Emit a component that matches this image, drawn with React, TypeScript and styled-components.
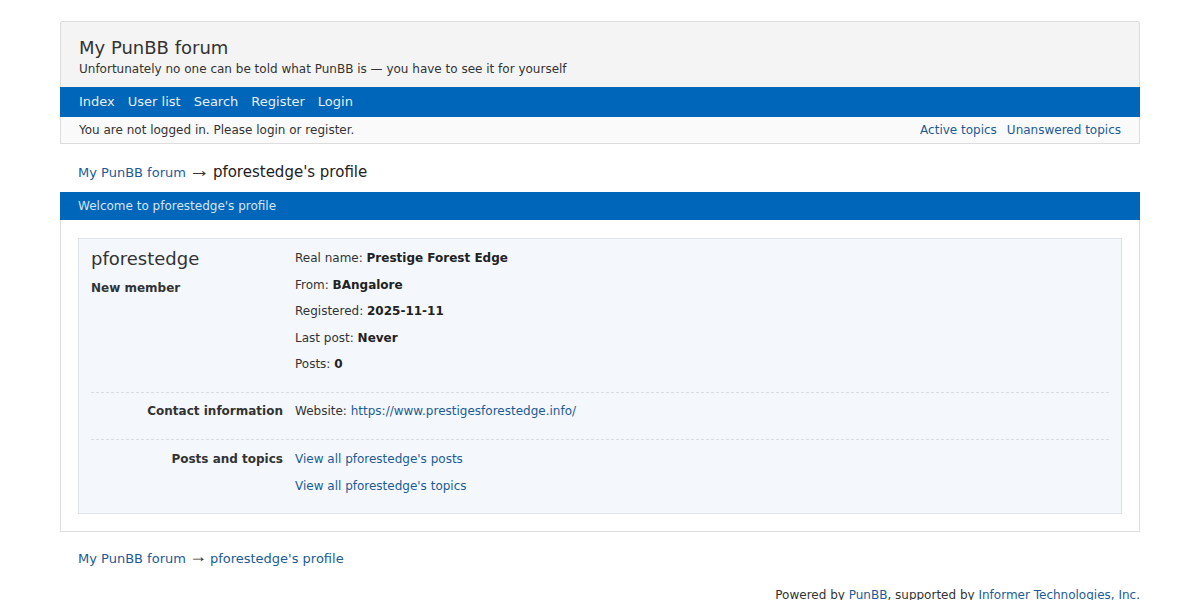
import React from 'react';
import styled, { createGlobalStyle } from 'styled-components';

const GlobalStyle = createGlobalStyle`
  html, body {
    margin: 0;
    padding: 0;
    background: #fff;
  }
  body {
    font-family: "DejaVu Sans", Verdana, sans-serif;
    font-size: 13px;
    color: #333;
  }
  a {
    color: #1c5b96;
    text-decoration: none;
  }
`;

const Page = styled.div`
  width: 1080px;
  margin: 0 auto;
  padding-top: 21px;
`;

const Brand = styled.div`
  background: #f4f4f4;
  border: 1px solid #ddd;
  border-bottom: none;
  border-radius: 3px 3px 0 0;
  padding: 15px 18px 10px;

  h1 {
    margin: 0;
    font-size: 18px;
    font-weight: normal;
    color: #333;
    line-height: 22px;
  }
  p {
    margin: 2px 0 0;
    font-size: 12px;
    line-height: 16px;
  }
`;

const NavBar = styled.nav`
  background: #0066b9;
  height: 30px;
  box-sizing: border-box;
  display: flex;
  align-items: center;
  gap: 13px;
  padding: 0 19px 2px;

  a {
    color: #e6eef8;
    font-size: 13px;
  }
`;

const StatusBar = styled.div`
  background: #fafafa;
  border: 1px solid #ddd;
  border-top: none;
  height: 26px;
  display: flex;
  align-items: center;
  justify-content: space-between;
  padding: 0 18px;
  font-size: 12px;

  div {
    display: flex;
    gap: 10px;
  }
`;

const Crumbs = styled.div<{ $top?: boolean }>`
  padding: 0 18px;
  height: 28px;
  display: flex;
  align-items: center;
  gap: 3px;
  margin: ${p => (p.$top ? '14px 0 6px' : '12px 0 0')};
  font-size: 13px;

  strong {
    font-weight: normal;
    font-size: 15px;
    color: #222;
  }
`;

const Arrow = styled.span<{ $size: number }>`
  font-family: "Liberation Sans", Arial, sans-serif;
  font-size: ${p => p.$size}px;
  line-height: 1;
  color: #333;
  margin-bottom: ${p => Math.round(p.$size / 4)}px;
`;

const SectionHead = styled.div`
  background: #0066b9;
  color: #d6e4f3;
  height: 28px;
  display: flex;
  align-items: center;
  padding: 0 18px;
  font-size: 12px;
`;

const Main = styled.div`
  border: 1px solid #ddd;
  border-top: none;
  padding: 18px 17px 17px;
`;

const Profile = styled.div`
  background: #f4f8fc;
  border: 1px solid #dde3ea;
  padding: 0 12px;
`;

const Row = styled.div<{ $split?: boolean }>`
  display: grid;
  grid-template-columns: 192px 1fr;
  column-gap: 12px;
  padding: ${p => (p.$split ? '5px 0 15px' : '6px 0 14px')};
  border-top: ${p => (p.$split ? '1px dashed #d6dde5' : 'none')};

  &:last-child {
    padding: 6px 0 14px;
  }
`;

const Ident = styled.div`
  h2 {
    margin: 2px 0 0;
    font-size: 18px;
    font-weight: normal;
    color: #333;
    line-height: 24px;
  }
  b {
    display: block;
    margin-top: 10px;
    font-size: 12px;
    line-height: 15px;
  }
`;

const Label = styled.div`
  text-align: right;
  font-weight: bold;
  font-size: 12px;
  line-height: 26.5px;
`;

const List = styled.ul`
  list-style: none;
  margin: 0;
  padding: 0;

  li {
    font-size: 12px;
    line-height: 26.5px;
  }
  b {
    color: #222;
  }
`;

const Footer = styled.div`
  text-align: right;
  font-size: 12px;
  line-height: 16px;
  margin-top: 15px;
`;

export default function App() {
  return (
    <>
      <GlobalStyle />
      <Page>
        <Brand>
          <h1>My PunBB forum</h1>
          <p>Unfortunately no one can be told what PunBB is — you have to see it for yourself</p>
        </Brand>
        <NavBar>
          <a href="#">Index</a>
          <a href="#">User list</a>
          <a href="#">Search</a>
          <a href="#">Register</a>
          <a href="#">Login</a>
        </NavBar>
        <StatusBar>
          <span>You are not logged in. Please login or register.</span>
          <div>
            <a href="#">Active topics</a>
            <a href="#">Unanswered topics</a>
          </div>
        </StatusBar>

        <Crumbs $top>
          <a href="#">My PunBB forum</a>
          <Arrow $size={21}>→</Arrow>
          <strong>pforestedge's profile</strong>
        </Crumbs>

        <SectionHead>Welcome to pforestedge's profile</SectionHead>
        <Main>
          <Profile>
            <Row>
              <Ident>
                <h2>pforestedge</h2>
                <b>New member</b>
              </Ident>
              <List>
                <li>Real name: <b>Prestige Forest Edge</b></li>
                <li>From: <b>BAngalore</b></li>
                <li>Registered: <b>2025-11-11</b></li>
                <li>Last post: <b>Never</b></li>
                <li>Posts: <b>0</b></li>
              </List>
            </Row>
            <Row $split>
              <Label>Contact information</Label>
              <List>
                <li>Website: <a href="#">https://www.prestigesforestedge.info/</a></li>
              </List>
            </Row>
            <Row $split>
              <Label>Posts and topics</Label>
              <List>
                <li><a href="#">View all pforestedge's posts</a></li>
                <li><a href="#">View all pforestedge's topics</a></li>
              </List>
            </Row>
          </Profile>
        </Main>

        <Crumbs>
          <a href="#">My PunBB forum</a>
          <Arrow $size={18}>→</Arrow>
          <a href="#">pforestedge's profile</a>
        </Crumbs>

        <Footer>
          Powered by <a href="#">PunBB</a>, supported by <a href="#">Informer Technologies, Inc</a>.
        </Footer>
      </Page>
    </>
  );
}
